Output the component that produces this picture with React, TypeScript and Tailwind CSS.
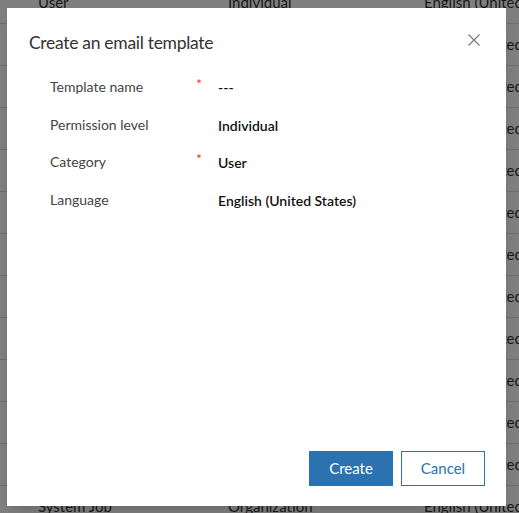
import React from 'react';

const rows = [
  ['User', 'Individual', 'English (United States)'],
  ['User', 'Individual', 'English (United States)'],
  ['User', 'Individual', 'English (United States)'],
  ['User', 'Individual', 'English (United States)'],
  ['User', 'Individual', 'English (United States)'],
  ['User', 'Individual', 'English (United States)'],
  ['User', 'Individual', 'English (United States)'],
  ['User', 'Individual', 'English (United States)'],
  ['User', 'Individual', 'English (United States)'],
  ['User', 'Individual', 'English (United States)'],
  ['User', 'Individual', 'English (United States)'],
  ['User', 'Individual', 'English (United States)'],
  ['System Job', 'Organization', 'English (United States)'],
];

const fields = [
  { label: 'Template name', required: true, value: '---' },
  { label: 'Permission level', required: false, value: 'Individual' },
  { label: 'Category', required: true, value: 'User' },
  { label: 'Language', required: false, value: 'English (United States)' },
];

export default function App() {
  return (
    <div className="relative h-[513px] w-[519px] overflow-hidden bg-white font-['Lato',sans-serif]">
      {/* Background grid */}
      <div className="-mt-[18px]">
        {rows.map((row, i) => (
          <div key={i} className="flex h-[42px] items-center border-b border-[#dcdcdc] text-[15px] text-[#333]">
            <div className="w-[228px] shrink-0 pl-[38px]">{row[0]}</div>
            <div className="w-[196px] shrink-0">{row[1]}</div>
            <div className="whitespace-nowrap">{row[2]}</div>
          </div>
        ))}
      </div>

      {/* Overlay */}
      <div className="absolute inset-0 bg-black/50" />

      {/* Dialog */}
      <div className="absolute left-[7px] top-[8px] flex h-[498px] w-[499px] flex-col bg-white shadow-lg">
        <div className="flex items-start justify-between pl-[22px] pr-[20px] pt-[22px]">
          <h2 className="text-[17.5px] leading-[26px] tracking-[-0.3px] text-[#333]">Create an email template</h2>
          <button className="-mt-[2px] flex h-6 w-6 items-center justify-center text-[#777]">
            <svg width="12" height="12" viewBox="0 0 12 12" fill="none" stroke="currentColor" strokeWidth="1.1">
              <path d="M0.5 0.5L11.5 11.5M11.5 0.5L0.5 11.5" />
            </svg>
          </button>
        </div>

        <div className="mt-[12px] flex flex-col pl-[43px]">
          {fields.map((f) => (
            <div key={f.label} className="grid h-[37.5px] grid-cols-[146px_22px_1fr] items-center text-[14px]">
              <div className="text-[#444]">{f.label}</div>
              <div className="self-start pt-[9px] text-[14px] leading-none text-[#e33]">{f.required ? '*' : ''}</div>
              <div className="pt-[2px] font-semibold text-[#111]">{f.value}</div>
            </div>
          ))}
        </div>

        <div className="mt-auto flex justify-end gap-[8px] pb-[20px] pr-[21px]">
          <button className="h-[35px] w-[84px] bg-[#2b72b0] text-[15px] text-white">Create</button>
          <button className="h-[35px] w-[84px] border border-[#2b72b0] bg-white text-[15px] text-[#2b72b0]">
            Cancel
          </button>
        </div>
      </div>
    </div>
  );
}
